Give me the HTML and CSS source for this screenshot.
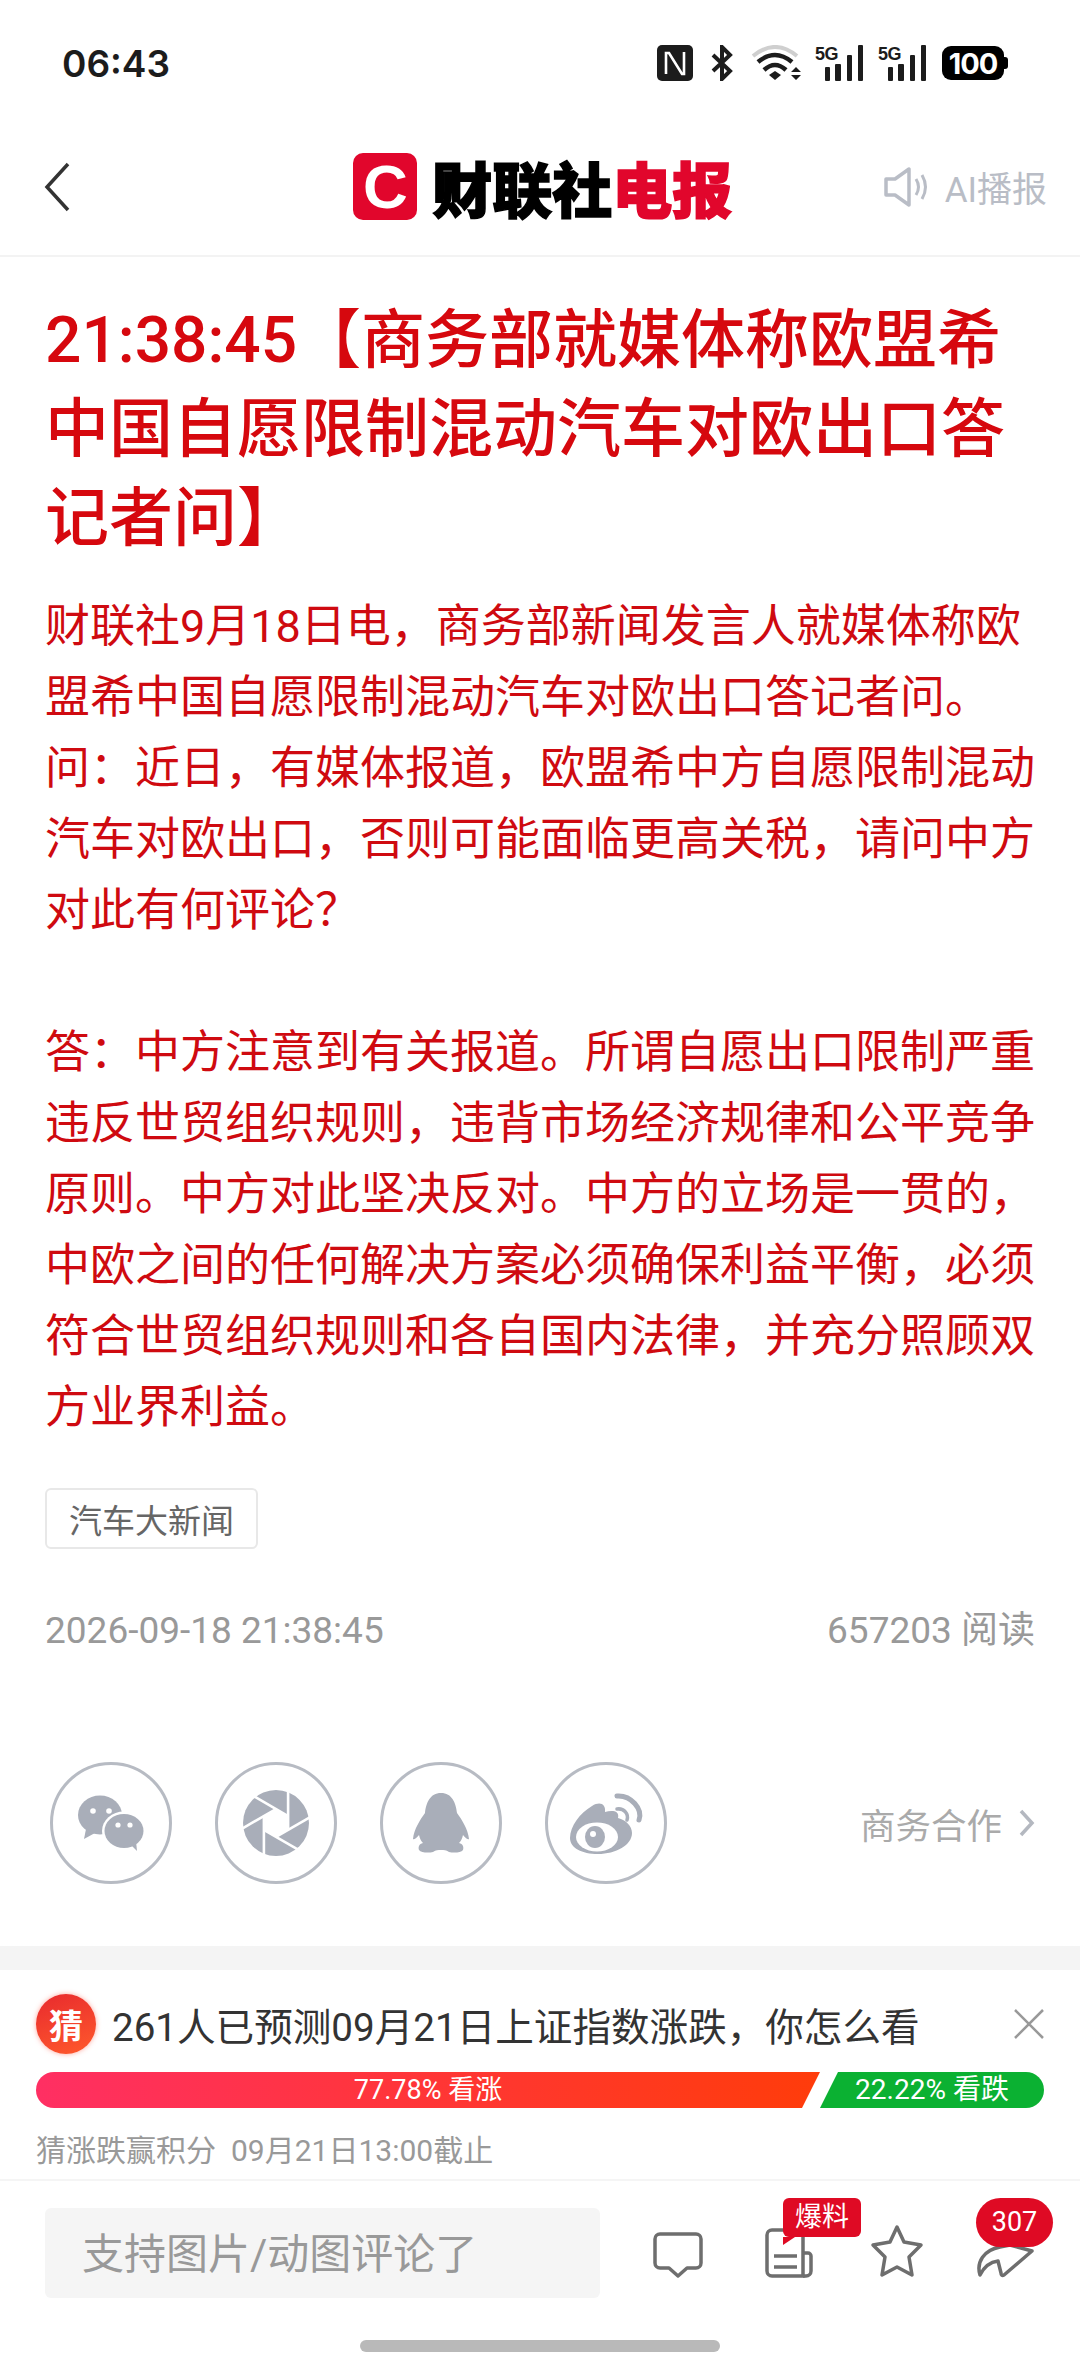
FILE: index.html
```html
<!DOCTYPE html>
<html lang="zh-CN">
<head>
    <meta charset="UTF-8">
    <meta name="viewport" content="width=device-width, initial-scale=1.0">
    <title>财联社电报</title>
    <link rel="stylesheet" href="styles.css">
</head>
<body>
    <div class="phone">
        <!-- Status bar -->
        <div class="status-bar">
            <span class="status-time">06:43</span>
            <div class="status-icons">
                <svg width="36" height="36" viewBox="0 0 36 36">
                    <rect width="36" height="36" rx="5" fill="#1c1c1c"/>
                    <path d="M9 29V8h3l13 21h2V7" fill="none" stroke="#fff" stroke-width="2.6"/>
                </svg>
                <svg class="icon-bt" width="24" height="36" viewBox="0 0 24 36">
                    <path d="M3 10l17 16-8 8V2l8 8L3 26" fill="none" stroke="#1c1c1c" stroke-width="4"/>
                </svg>
                <svg class="icon-wifi" width="52" height="36" viewBox="0 0 52 36">
                    <path d="M3 11Q25-7 47 11" fill="none" stroke="#cfcfcf" stroke-width="4"/>
                    <path d="M8 17Q25 3 42 17" fill="none" stroke="#1c1c1c" stroke-width="4.5"/>
                    <path d="M14 25Q25 15 36 25" fill="none" stroke="#1c1c1c" stroke-width="4.5"/>
                    <path d="M19 30l6-4 6 4-6 5z" fill="#1c1c1c"/>
                    <path d="M41 27l5-5 5 5zM41 30l5 5 5-5z" fill="#1c1c1c"/>
                </svg>
                <svg class="icon-signal" width="48" height="36" viewBox="0 0 48 36">
                    <text x="0" y="15" class="signal-text">5G</text>
                    <rect x="10" y="22" width="5" height="14" rx="1" fill="#1c1c1c"/>
                    <rect x="20" y="19" width="6" height="17" rx="1" fill="#1c1c1c"/>
                    <rect x="32" y="10" width="5" height="26" rx="1" fill="#1c1c1c"/>
                    <rect x="43" y="0" width="5" height="36" rx="1" fill="#1c1c1c"/>
                </svg>
                <svg class="icon-signal-2" width="48" height="36" viewBox="0 0 48 36">
                    <text x="0" y="15" class="signal-text">5G</text>
                    <rect x="10" y="22" width="5" height="14" rx="1" fill="#1c1c1c"/>
                    <rect x="20" y="19" width="6" height="17" rx="1" fill="#1c1c1c"/>
                    <rect x="32" y="10" width="5" height="26" rx="1" fill="#1c1c1c"/>
                    <rect x="43" y="0" width="5" height="36" rx="1" fill="#1c1c1c"/>
                </svg>
                <div class="battery"><span class="battery-num">100</span></div>
                <span class="battery-nub"></span>
            </div>
        </div>

        <!-- Top nav -->
        <div class="top-nav">
            <svg class="nav-back" width="26" height="50" viewBox="0 0 26 50">
                <path d="M24 2L3 25l21 23" fill="none" stroke="#333" stroke-width="3.5"/>
            </svg>
            <div class="nav-logo">
                <span class="logo-mark">C</span>
                <span class="logo-text">财联社<em>电报</em></span>
            </div>
            <div class="nav-audio">
                <svg width="44" height="42" viewBox="0 0 44 42">
                    <path d="M2 13h9L25 3v36L11 29H2z" fill="none" stroke="#b9bdc6" stroke-width="3.5" stroke-linejoin="round"/>
                    <path d="M32 13q5 8 0 16M38 9q7 12 0 24" fill="none" stroke="#b9bdc6" stroke-width="3"/>
                </svg>
                <span>AI播报</span>
            </div>
        </div>

        <!-- Article -->
        <div class="article">
            <h1 class="article-title">21:38:45【商务部就媒体称欧盟希中国自愿限制混动汽车对欧出口答记者问】</h1>
            <div class="article-body">
                <p>财联社9月18日电，商务部新闻发言人就媒体称欧盟希中国自愿限制混动汽车对欧出口答记者问。</p>
                <p>问：近日，有媒体报道，欧盟希中方自愿限制混动汽车对欧出口，否则可能面临更高关税，请问中方对此有何评论？</p>
                <p class="blank">&nbsp;</p>
                <p>答：中方注意到有关报道。所谓自愿出口限制严重违反世贸组织规则，违背市场经济规律和公平竞争原则。中方对此坚决反对。中方的立场是一贯的，中欧之间的任何解决方案必须确保利益平衡，必须符合世贸组织规则和各自国内法律，并充分照顾双方业界利益。</p>
            </div>
            <span class="article-tag">汽车大新闻</span>
            <div class="article-meta">
                <span>2026-09-18 21:38:45</span>
                <span>657203 阅读</span>
            </div>
        </div>

        <!-- Share row -->
        <div class="share-row">
            <div class="share-icon">
                <svg width="80" height="80" viewBox="-40 -40 80 80">
                    <ellipse cx="-11" cy="-8" rx="22" ry="19.5" fill="#a9aeb9"/>
                    <path d="M-25 6l-2 10 11-6z" fill="#a9aeb9"/>
                    <circle cx="-18" cy="-12" r="2.8" fill="#fff"/>
                    <circle cx="-2" cy="-12" r="2.8" fill="#fff"/>
                    <ellipse cx="13" cy="8" rx="22" ry="19.5" fill="#fff"/>
                    <ellipse cx="13" cy="8" rx="19.5" ry="17" fill="#a9aeb9"/>
                    <path d="M20 22l6 6-1-10z" fill="#a9aeb9"/>
                    <circle cx="7" cy="2" r="2.6" fill="#fff"/>
                    <circle cx="19" cy="2" r="2.6" fill="#fff"/>
                </svg>
            </div>
            <div class="share-icon">
                <svg width="80" height="80" viewBox="-40 -40 80 80">
                    <circle r="33" fill="#a9aeb9"/>
                    <polygon points="0,-14 12.1,-7 12.1,7 0,14 -12.1,7 -12.1,-7" fill="#fff"/>
                    <g stroke="#fff" stroke-width="2.6">
                        <line x1="12.1" y1="7" x2="12.1" y2="-36"/>
                        <line x1="12.1" y1="7" x2="12.1" y2="-36" transform="rotate(60)"/>
                        <line x1="12.1" y1="7" x2="12.1" y2="-36" transform="rotate(120)"/>
                        <line x1="12.1" y1="7" x2="12.1" y2="-36" transform="rotate(180)"/>
                        <line x1="12.1" y1="7" x2="12.1" y2="-36" transform="rotate(240)"/>
                        <line x1="12.1" y1="7" x2="12.1" y2="-36" transform="rotate(300)"/>
                    </g>
                </svg>
            </div>
            <div class="share-icon">
                <svg width="80" height="80" viewBox="-40 -40 80 80">
                    <path d="M0-30C-11-30-15-20-16-10C-21-3-27 6-28 16C-26 17-24 14-22 12C-21 16-20 18-18 20C-22 21-23 24-22 27C-20 30-12 30-8 29C-5 27-3 27 0 27C3 27 5 27 8 29C12 30 20 30 22 27C23 24 22 21 18 20C20 18 21 16 22 12C24 14 26 17 28 16C27 6 21-3 16-10C15-20 11-30 0-30Z" fill="#a9aeb9"/>
                </svg>
            </div>
            <div class="share-icon">
                <svg width="80" height="80" viewBox="-40 -40 80 80">
                    <path d="M-36 15C-36 3-26-10-14-17C-6-22 0-19-1-11C5-13 14-13 12-5C20-3 26 3 26 10C26 22 10 31-8 31C-24 31-36 25-36 15Z" fill="#a9aeb9"/>
                    <ellipse cx="-9" cy="14" rx="21" ry="14.5" fill="#fff"/>
                    <ellipse cx="-11" cy="14" rx="10" ry="11" fill="#a9aeb9"/>
                    <circle cx="-13" cy="11" r="3" fill="#fff"/>
                    <path d="M11-27C25-28 37-14 33-3" fill="none" stroke="#a9aeb9" stroke-width="5" stroke-linecap="round"/>
                    <path d="M11-14C18-15 23-9 21-3" fill="none" stroke="#a9aeb9" stroke-width="3.5" stroke-linecap="round"/>
                </svg>
            </div>
            <div class="share-biz">
                <span>商务合作</span>
                <svg width="16" height="28" viewBox="0 0 16 28">
                    <path d="M2 2l11 12L2 26" fill="none" stroke="#b4b8c0" stroke-width="3.5"/>
                </svg>
            </div>
        </div>

        <div class="gray-band"></div>

        <!-- Guess the index -->
        <div class="guess">
            <div class="guess-head">
                <span class="guess-badge">猜</span>
                <span class="guess-title">261人已预测09月21日上证指数涨跌，你怎么看</span>
                <svg class="guess-close" width="30" height="30" viewBox="0 0 30 30">
                    <path d="M1 1l28 28M29 1L1 29" stroke="#999" stroke-width="2.5"/>
                </svg>
            </div>
            <div class="guess-bar">
                <div class="bar-up">77.78% 看涨</div>
                <div class="bar-down">22.22% 看跌</div>
            </div>
            <div class="guess-note"><span>猜涨跌赢积分</span><span>09月21日13:00截止</span></div>
        </div>

        <!-- Bottom bar -->
        <div class="bottom-bar">
            <div class="comment-input">支持图片/动图评论了</div>
            <div class="bottom-actions">
                <svg width="50" height="46" viewBox="0 0 50 46">
                    <path d="M7 2h36a5 5 0 0 1 5 5v24a5 5 0 0 1-5 5H34l-9 8-9-8H7a5 5 0 0 1-5-5V7a5 5 0 0 1 5-5z" fill="none" stroke="#6e6e6e" stroke-width="3.5" stroke-linejoin="round"/>
                </svg>
                <div class="action-doc">
                    <svg width="48" height="50" viewBox="0 0 48 50">
                        <path d="M7 2h26a5 5 0 0 1 5 5v41H7a5 5 0 0 1-5-5V7a5 5 0 0 1 5-5z" fill="none" stroke="#6e6e6e" stroke-width="3.5"/>
                        <path d="M38 25h5a3 3 0 0 1 3 3v15a5 5 0 0 1-5 5h-3" fill="none" stroke="#6e6e6e" stroke-width="3.5"/>
                        <path d="M9 28h23M9 39h23" stroke="#6e6e6e" stroke-width="3.5"/>
                    </svg>
                    <span class="badge-tip">爆料</span>
                </div>
                <svg width="54" height="54" viewBox="0 0 54 54">
                    <path d="M27 3l7 15 17 3-12 12 3 18-15-8-15 8 3-18L3 21l17-3z" fill="none" stroke="#6e6e6e" stroke-width="3.5" stroke-linejoin="round"/>
                </svg>
                <div class="action-share">
                    <svg width="58" height="54" viewBox="0 0 58 54">
                        <path d="M4 51C0 38 8 26 24 23L34 21L56 27L28 51C26 52 25 51 25 49L22 37C14 38 8 43 4 51Z" fill="none" stroke="#6e6e6e" stroke-width="3.5" stroke-linejoin="round"/>
                    </svg>
                    <span class="badge-count">307</span>
                </div>
            </div>
        </div>

        <div class="home-indicator"></div>
    </div>
</body>
</html>
```

FILE: styles.css
```css
* {
    box-sizing: border-box;
}

html,
body {
    margin: 0;
    padding: 0;
    background-color: #fff;
}

.phone {
    width: 1080px;
    height: 2376px;
    overflow: hidden;
    font-family: Roboto, "Noto Sans CJK SC", sans-serif;
    color: #333;
    background-color: #fff;
}

/* Status bar */
.status-bar {
    display: flex;
    align-items: center;
    justify-content: space-between;
    height: 126px;
    padding: 0 72px 0 62px;
}

.status-time {
    font-family: Inter, Roboto, sans-serif;
    font-size: 37px;
    font-weight: 600;
    color: #1c1c1c;
}

.status-icons {
    display: flex;
    align-items: center;
}

.icon-bt {
    margin-left: 17px;
}

.icon-wifi {
    margin-left: 16px;
}

.icon-signal {
    margin-left: 13px;
}

.icon-signal-2 {
    margin-left: 15px;
}

.signal-text {
    font-family: "Liberation Sans", sans-serif;
    font-size: 18px;
    font-weight: 700;
    fill: #1c1c1c;
    letter-spacing: -0.5px;
}

.battery {
    display: flex;
    align-items: center;
    justify-content: center;
    width: 62px;
    height: 34px;
    margin-left: 16px;
    border-radius: 9px;
    background-color: #000;
}

.battery-num {
    font-family: Inter, Roboto, sans-serif;
    font-size: 29px;
    font-weight: 700;
    letter-spacing: -1px;
    color: #fff;
}

.battery-nub {
    width: 4px;
    height: 12px;
    border-radius: 0 3px 3px 0;
    background-color: #000;
}

/* Top nav */
.top-nav {
    display: flex;
    align-items: center;
    justify-content: space-between;
    height: 131px;
    padding: 0 33px 8px 44px;
    border-bottom: 2px solid #f3f3f3;
}

.nav-logo {
    display: flex;
    align-items: center;
    margin-left: 132px;
}

.logo-mark {
    display: flex;
    align-items: center;
    justify-content: center;
    width: 64px;
    height: 67px;
    border-radius: 10px;
    font-family: "Liberation Sans", sans-serif;
    font-size: 62px;
    font-weight: 700;
    color: #fff;
    background-color: #e1062c;
}

.logo-text {
    margin-left: 15px;
    font-family: "Noto Sans CJK SC", sans-serif;
    font-size: 60px;
    font-weight: 900;
    line-height: 64px;
    color: #000;
    -webkit-text-stroke: 1.5px currentColor;
}

.logo-text em {
    font-style: normal;
    color: #e1062c;
}

.nav-audio {
    display: flex;
    align-items: center;
    gap: 17px;
    font-size: 35px;
    color: #b9bdc6;
}

/* Article */
.article {
    padding: 39px 45px 0;
}

.article-title {
    margin: 0;
    font-size: 64px;
    font-weight: 500;
    line-height: 89px;
    color: #d6080e;
}

.article-body {
    margin-top: 28px;
    font-size: 45px;
    line-height: 71px;
    color: #cf0a10;
}

.article-body p {
    margin: 0;
}

.article-tag {
    display: inline-flex;
    align-items: center;
    height: 61px;
    margin-top: 45px;
    padding: 0 22px;
    border: 2px solid #e8e8e8;
    border-radius: 6px;
    font-size: 33px;
    color: #666;
}

.article-meta {
    display: flex;
    justify-content: space-between;
    margin-top: 57px;
    font-size: 37px;
    line-height: 50px;
    color: #999;
}

/* Share row */
.share-row {
    display: flex;
    align-items: center;
    gap: 43px;
    margin-top: 106px;
    padding: 0 45px 0 50px;
}

.share-icon {
    display: flex;
    align-items: center;
    justify-content: center;
    width: 122px;
    height: 122px;
    border: 3px solid #b7bbc3;
    border-radius: 50%;
}

.share-biz {
    display: flex;
    align-items: center;
    gap: 17px;
    margin-left: auto;
    font-size: 35.5px;
    color: #aaa;
}

.gray-band {
    height: 24px;
    margin-top: 62px;
    background-color: #f4f4f4;
}

/* Guess block */
.guess {
    height: 211px;
    padding: 24px 36px 0;
    border-bottom: 2px solid #f5f5f5;
}

.guess-head {
    display: flex;
    align-items: center;
    height: 60px;
}

.guess-badge {
    display: flex;
    align-items: center;
    justify-content: center;
    width: 60px;
    height: 60px;
    border-radius: 50%;
    font-size: 34px;
    font-weight: 700;
    color: #fff;
    background: linear-gradient(160deg, #e82a2e, #ff5a2c);
    box-shadow: 0 0 5px rgba(255, 80, 60, 0.5);
}

.guess-title {
    margin-left: 16px;
    font-size: 38.6px;
    white-space: nowrap;
    color: #333;
}

.guess-close {
    margin-left: auto;
}

.guess-bar {
    display: flex;
    height: 36px;
    margin-top: 18px;
    font-size: 27px;
    line-height: 36px;
    color: #fff;
    text-align: center;
}

.bar-up {
    width: 784px;
    border-radius: 18px 0 0 18px;
    background: linear-gradient(90deg, #ff2f63, #ff3c0a);
    clip-path: polygon(0 0, 100% 0, 766px 100%, 0 100%);
}

.bar-down {
    width: 224px;
    border-radius: 0 18px 18px 0;
    font-size: 28px;
    background-color: #0bb132;
    clip-path: polygon(18px 0, 100% 0, 100% 100%, 0 100%);
}

.guess-note {
    display: flex;
    gap: 15px;
    margin-top: 25px;
    font-size: 30px;
    line-height: 36px;
    color: #999;
}

/* Bottom bar */
.bottom-bar {
    display: flex;
    align-items: flex-end;
    padding: 27px 0 0 45px;
}

.comment-input {
    width: 555px;
    height: 90px;
    padding-left: 37px;
    border-radius: 6px;
    font-size: 42px;
    line-height: 94px;
    color: #999;
    background-color: #f5f5f5;
}

.bottom-actions {
    display: grid;
    grid-template-columns: 112px 105px 106px 58px;
    align-items: end;
    margin-left: 53px;
    margin-bottom: 20px;
}

.action-doc,
.action-share {
    position: relative;
    display: flex;
}

.badge-tip {
    position: absolute;
    top: -30px;
    left: 18px;
    width: 78px;
    height: 39px;
    border-radius: 6px;
    font-size: 27px;
    line-height: 39px;
    color: #fff;
    text-align: center;
    background-color: #df0a24;
}

.badge-tip::after {
    content: "";
    position: absolute;
    top: 39px;
    left: 0;
    border-top: 8px solid #df0a24;
    border-right: 12px solid transparent;
}

.badge-count {
    position: absolute;
    top: -26px;
    left: 0;
    width: 77px;
    height: 49px;
    border-radius: 25px;
    font-size: 27px;
    line-height: 49px;
    color: #fff;
    text-align: center;
    background-color: #df0a24;
}

.home-indicator {
    width: 360px;
    height: 12px;
    margin: 42px auto 0;
    border-radius: 6px;
    background-color: #b9b9b9;
}
```
